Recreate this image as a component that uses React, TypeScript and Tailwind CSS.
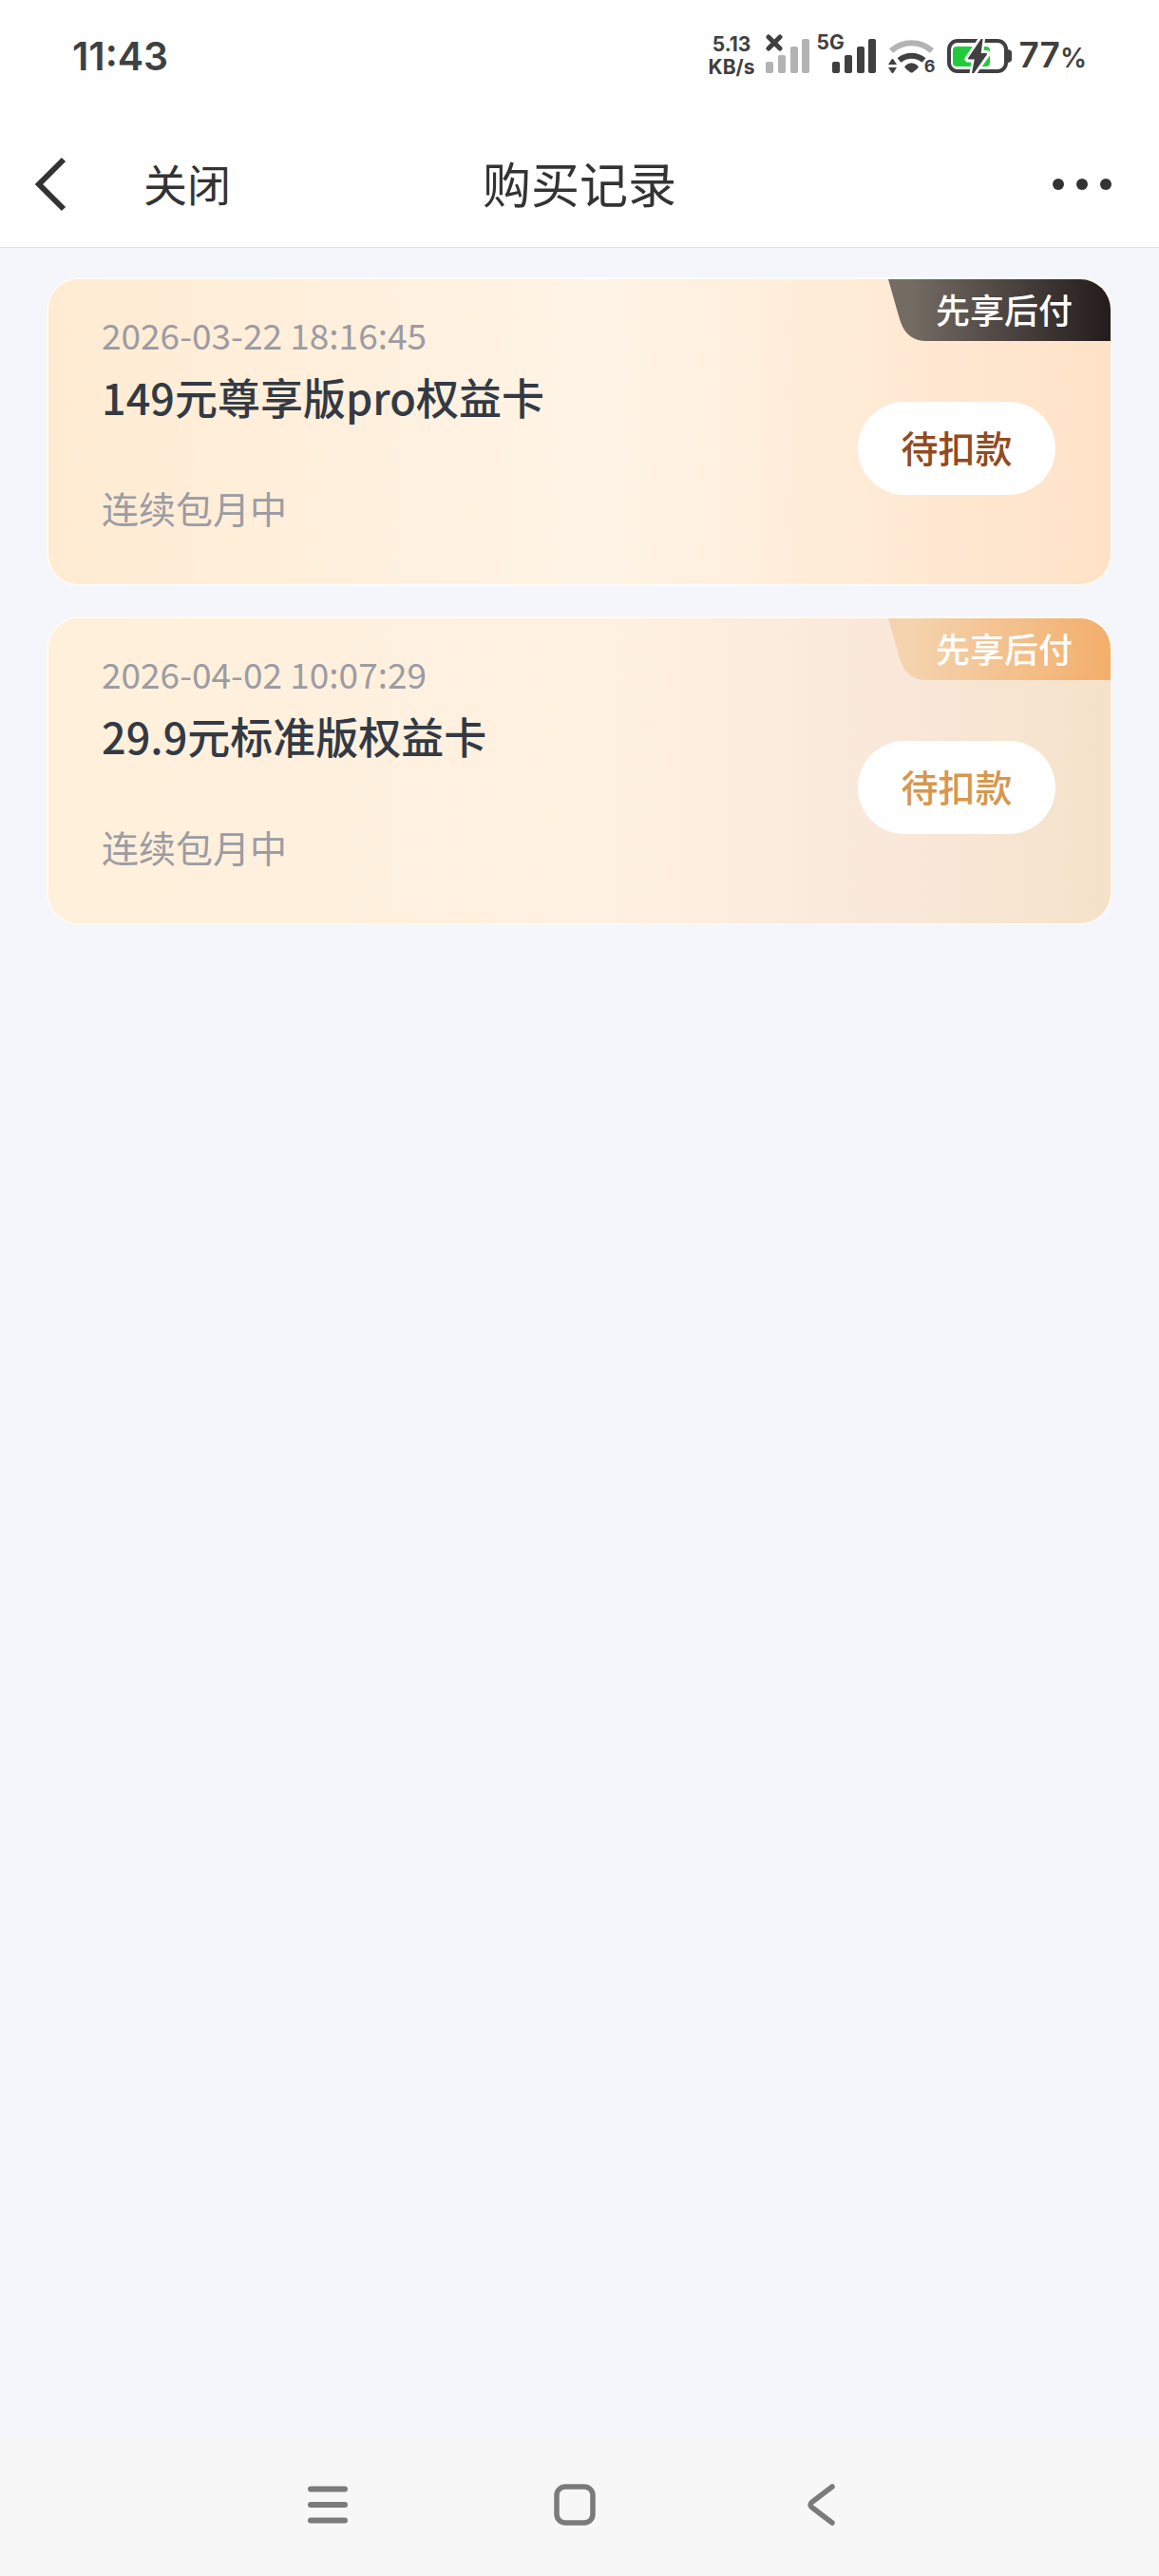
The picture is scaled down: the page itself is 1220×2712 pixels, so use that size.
type CardTheme = 'premium' | 'standard';

interface PurchaseRecord {
  id: number;
  time: string;
  name: string;
  renewal: string;
  payType: string;
  status: string;
  theme: CardTheme;
}

const records: PurchaseRecord[] = [
  {
    id: 1,
    time: '2026-03-22 18:16:45',
    name: '149元尊享版pro权益卡',
    renewal: '连续包月中',
    payType: '先享后付',
    status: '待扣款',
    theme: 'premium',
  },
  {
    id: 2,
    time: '2026-04-02 10:07:29',
    name: '29.9元标准版权益卡',
    renewal: '连续包月中',
    payType: '先享后付',
    status: '待扣款',
    theme: 'standard',
  },
];

const themes = {
  premium: {
    card: 'bg-[linear-gradient(90deg,#ffebd2_0%,#fff4e6_52%,#fee2c7_100%)]',
    button: 'text-[#924a20]',
    from: '#746b63',
    to: '#231c1c',
  },
  standard: {
    card: 'bg-[linear-gradient(90deg,#fff0db_0%,#fff1e1_52%,#f9e8da_80%,#f5e2c9_100%)]',
    button: 'text-[#d6974e]',
    from: '#f4d3ae',
    to: '#f3ae6b',
  },
};

const SignalBars = ({ color }: { color: string }) => (
  <svg className="h-9 w-[46px]" viewBox="0 0 46 36" fill={color}>
    <rect x="0" y="24" width="8" height="12" rx="2" />
    <rect x="13" y="17" width="8" height="19" rx="2" />
    <rect x="26" y="8" width="8" height="28" rx="2" />
    <rect x="38" y="0" width="8" height="36" rx="2" />
  </svg>
);

const WifiIcon = () => (
  <div className="relative">
    <svg className="h-9 w-[50px]" viewBox="0 0 50 36" fill="none">
      <path d="M4 12.500A32 32 0 0 1 47 12.500" stroke="#b3b3b3" strokeWidth="6" />
      <path d="M12.500 22.500A20 20 0 0 1 38.500 22.500" stroke="#404040" strokeWidth="6" />
      <path d="M19 28Q25.500 22.500 32 28Q33.500 29.500 32 31L27 35Q25.500 36 24 35L19 31Q17.500 29.500 19 28Z" fill="#404040" />
      <path d="M1 27L4.500 21.500Q5.500 20.500 6.500 21.500L10 27ZM1 30H10L6.500 35.500Q5.500 36.500 4.500 35.500Z" fill="#404040" />
    </svg>
    <span className="absolute -right-px -bottom-[3px] text-[18px] leading-[20px] font-bold">6</span>
  </div>
);

const BatteryIcon = () => (
  <svg className="h-9 w-[68px]" viewBox="0 0 68 36" fill="none">
    <rect x="2" y="2" width="60" height="32" rx="9" stroke="#404040" strokeWidth="4" />
    <path d="M64 11Q68 12 68 14V22Q68 24 64 25Z" fill="#404040" />
    <rect x="6" y="8" width="39" height="21" rx="4" fill="#21cc3b" />
    <path
      d="M36.500 0L22 21H29.500L27 36.500L42 15.500H34.500Z"
      fill="#404040"
      stroke="#fff"
      strokeWidth="7"
      strokeLinejoin="round"
    />
    <path d="M36.500 0.500L23 20.500H30L27 36L41 16H34.500Z" fill="#404040" stroke="#404040" strokeWidth="2" strokeLinejoin="round" />
  </svg>
);

const StatusBar = () => (
  <div className="flex h-32 items-center justify-between bg-white pr-[76px] pb-[10px] pl-[76px] text-[#404040]">
    <span className="text-[41px] leading-[48px] font-semibold">11:43</span>
    <div className="flex items-center">
      <div className="mr-[11px] text-center text-[21px] leading-[24px] font-bold">
        <p>5.13</p>
        <p>KB/s</p>
      </div>
      <div className="relative mr-[24px]">
        <SignalBars color="#b3b3b3" />
        <svg className="absolute -top-[5px] left-0 h-[18px] w-[18px]" viewBox="0 0 18 18">
          <path d="M3 3L15 15M15 3L3 15" stroke="#404040" strokeWidth="5" strokeLinecap="round" />
        </svg>
      </div>
      <div className="relative mr-[12px]">
        <SignalBars color="#404040" />
        <span className="absolute -top-[8px] -left-[16px] text-[21px] leading-[24px] font-bold">5G</span>
      </div>
      <WifiIcon />
      <div className="mr-[8px] ml-[13px]">
        <BatteryIcon />
      </div>
      <p className="flex items-baseline font-semibold">
        <span className="text-[37px] leading-[48px]">77</span>
        <span className="text-[28px] leading-[48px]">%</span>
      </p>
    </div>
  </div>
);

const Header = () => (
  <header className="grid h-[133px] grid-cols-3 items-center border-b border-[#e0e2e4] bg-white px-[36px] text-[#333333]">
    <div className="flex items-center gap-[80px]">
      <button type="button" aria-label="返回">
        <svg className="h-[58px] w-[35px]" viewBox="0 0 35 58" fill="none">
          <path d="M31 3L5 29L31 55" stroke="#333333" strokeWidth="6" />
        </svg>
      </button>
      <button type="button" className="pb-1 text-[46px] leading-[64px]">
        关闭
      </button>
    </div>
    <h1 className="pb-1 text-center text-[51px] leading-[64px]">购买记录</h1>
    <button type="button" aria-label="更多" className="mr-[14px] flex gap-[13px] justify-self-end">
      <span className="size-[12px] rounded-full bg-[#333333]" />
      <span className="size-[12px] rounded-full bg-[#333333]" />
      <span className="size-[12px] rounded-full bg-[#333333]" />
    </button>
  </header>
);

const RecordCard = ({ record }: { record: PurchaseRecord }) => {
  const theme = themes[record.theme];
  const gradientId = `tag-${record.id}`;

  return (
    <li className="rounded-[34px] bg-[#fffaf4] p-[2px]">
      <div className={`relative flex h-[321px] items-start justify-between overflow-hidden rounded-[32px] pr-[58px] pl-[56px] ${theme.card}`}>
        <div className="pt-8">
          <p className="text-[37px] leading-[52px] text-[#9c9ca3]">{record.time}</p>
          <h2 className="mt-2 text-[45px] leading-[64px] font-medium text-[#333a44]">{record.name}</h2>
          <p className="mt-[58px] text-[39px] leading-[52px] text-[#9c9ca3]">{record.renewal}</p>
        </div>

        <button
          type="button"
          className={`mt-[129px] h-[98px] w-[208px] rounded-full bg-white pb-1 text-[39px] leading-[52px] font-medium ${theme.button}`}
        >
          {record.status}
        </button>

        {/* Corner tag */}
        <div className="absolute top-0 right-0 h-[65px] w-[234px]">
          <svg className="absolute inset-0 h-full w-full" viewBox="0 0 234 65">
            <defs>
              <linearGradient id={gradientId} x1="0" x2="1" y1="0" y2="0">
                <stop offset="0.100" stopColor={theme.from} />
                <stop offset="1" stopColor={theme.to} />
              </linearGradient>
            </defs>
            <path d="M0 0H234V65H40Q20 65 13 45Q11 39 0 0Z" fill={`url(#${gradientId})`} />
          </svg>
          <span className="relative block pr-10 text-right text-[36px] leading-[62px] font-medium text-white">
            {record.payType}
          </span>
        </div>
      </div>
    </li>
  );
};

const NavBar = () => (
  <nav className="flex h-[142px] items-center justify-center gap-[216px] bg-[#f7f7f7] pr-[10px] pb-[8px]">
    <button type="button" aria-label="最近任务">
      <svg className="size-[44px]" viewBox="0 0 44 44" fill="none" stroke="#7b7b7b" strokeWidth="6" strokeLinecap="round">
        <path d="M4 5.500H40M4 22H40M4 38.500H40" />
      </svg>
    </button>
    <button type="button" aria-label="主屏幕">
      <svg className="size-[44px]" viewBox="0 0 44 44" fill="none" stroke="#7b7b7b" strokeWidth="5.500">
        <rect x="3" y="3" width="38" height="38" rx="9" />
      </svg>
    </button>
    <button type="button" aria-label="返回">
      <svg className="size-[44px]" viewBox="0 0 44 44" fill="none" stroke="#7b7b7b" strokeWidth="5.500" strokeLinecap="round">
        <path d="M33 3L12 19Q8 22 12 25L33 41" />
      </svg>
    </button>
  </nav>
);

export default function App() {
  return (
    <div className="flex min-h-screen flex-col bg-[#f4f6fb] font-['Inter','Noto_Sans_CJK_SC',sans-serif]">
      <StatusBar />
      <div className="flex grow flex-col font-['Noto_Sans_CJK_SC',sans-serif]">
        <Header />
        <main className="grow px-[49px] py-[31px]">
          <ul className="flex flex-col gap-[32px]">
            {records.map((record) => (
              <RecordCard key={record.id} record={record} />
            ))}
          </ul>
        </main>
        <NavBar />
      </div>
    </div>
  );
}
